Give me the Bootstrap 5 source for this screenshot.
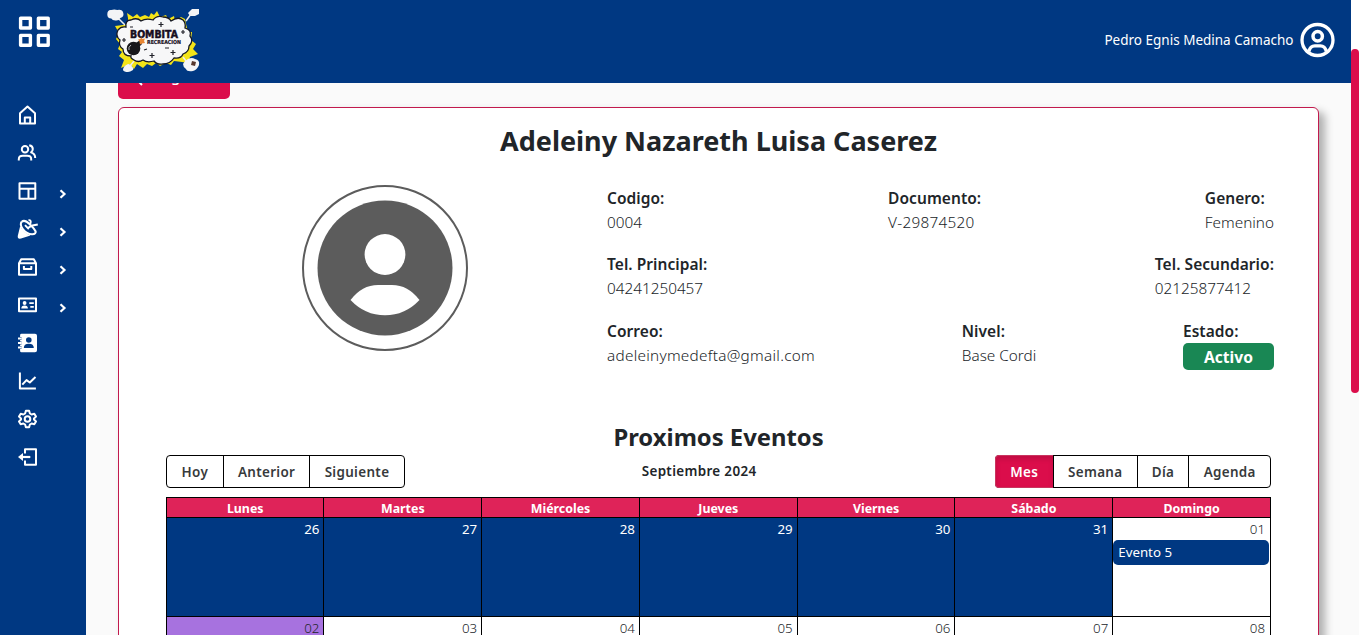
<!DOCTYPE html>
<html lang="es">
<head>
<meta charset="utf-8">
<meta name="viewport" content="width=device-width, initial-scale=1">
<title>Bombita Recreación</title>
<link href="https://cdn.jsdelivr.net/npm/bootstrap@5.3.0/dist/css/bootstrap.min.css" rel="stylesheet">
<style>
:root { --azul: #003882; --rojo: #db0d4b; }
body { font-family: "Noto Sans", "Open Sans", sans-serif; background: #fafafa; color: #212529; line-height: 1.5; }
.azul { background: var(--azul); }
.topbar { height: 83px; padding: 0 16px 0 18px; }
.topbar .menu-ico { margin-top: 14.5px; }
.logo { margin: 6px 0 0 54px; }
.usuario { font-size: 13.5px; height: 80px; gap: 6.5px; }
.sidebar { width: 86px; padding-top: 13px; }
.item { height: 38px; padding-left: 17px; gap: 19px; }
.item svg { display: block; }
.item .chev { margin-top: 5px; }
.ico { fill: none; stroke: #fff; stroke-width: 2; stroke-linejoin: round; stroke-linecap: butt; }
.contenido { padding: 0 32px; }
.regresar { width: 112px; height: 38px; margin-top: -22px; background: var(--rojo); border-radius: 5px; font-size: 15px; line-height: 1; font-weight: 500; gap: 6px; padding-bottom: 7px; }
.ficha { margin-top: 8px; height: 900px; border: 1px solid #c21a4d; border-radius: 6px; box-shadow: 6px 5px 9px rgba(0,0,0,.3); padding: 0 44px 0 47px; }
.titulo { font-size: 27px; font-weight: 700; line-height: 34px; margin: 16px 3px 0 0; }
.datos { height: 256px; padding-top: 27px; }
.avatar { margin-left: 136px; width: 166px; height: 166px; border: 2px solid #5c5c5c; }
.campos { width: 667px; padding-top: .5px; }
.fila + .fila { margin-top: 17.5px; }
.etq { font-size: 15.5px; font-weight: 600; line-height: 24px; letter-spacing: .05px; }
.val { font-size: 15.3px; font-weight: 350; line-height: 25px; }
.correo, .doc { letter-spacing: .28px; }
.activo { width: 91px; height: 27px; font-size: 15.6px; line-height: 28px; margin-top: .5px; background: #198754; border-radius: 5px; }
.subtitulo { font-size: 23.8px; font-weight: 700; line-height: 34px; margin: 6px 3px 0 0; }
.barra { height: 33px; margin: 1px 3px 9px 0; font-size: 13.45px; font-weight: 650; letter-spacing: .33px; }
.grupo { border: 1px solid #000; border-radius: 4px; height: 33px; color: #373a3c; }
.grupo span { padding: 0 14.2px; line-height: 32px; }
.grupo span:first-child { padding: 0 14.6px; }
.grupo span + span { border-left: 1px solid #000; }
.grupo .activa { background: var(--rojo); color: #fff; box-shadow: inset 0 3px 5px rgba(0,0,0,.125); margin: -1px 0 -1px -1px; border-radius: 4px 0 0 4px; border: 1px solid #c9355f; border-right: 0; }
.mes { padding: 6px 1px 0 0; }
.calendario { margin-right: 3px; border: 1px solid #000; height: 700px; }
.dias { height: 20px; background: #df2359; border-bottom: 1px solid #000; color: #fff; font-size: 12.4px; font-weight: 700; line-height: 21px; text-align: center; }
.dias > div, .semana > div { flex: 1 1 0; }
.dias > div:first-child, .semana > div:first-child { flex-grow: .9977; }
.dias > div + div, .semana > div + div { border-left: 1px solid #000; }
.semana { height: 99px; border-bottom: 1px solid #000; font-size: 13.3px; font-weight: 350; }
.num { display: block; text-align: right; padding-right: 4px; line-height: 22px; }
.semana .domingo .num { padding-right: 5px; }
.fuera { background: var(--azul); color: #fff; font-weight: 400; }
.hoy { background: #a772df; }
.evento { background: var(--azul); color: #fff; border-radius: 5px; height: 25px; line-height: 24px; padding-left: 5px; margin-right: 1px; font-weight: 400; font-size: 13.3px; }
.riel { width: 8px; padding-top: 49px; background: linear-gradient(#fff 83px, #fafafa 83px); }
.pulgar { width: 8px; height: 344px; border-radius: 4px; background: var(--rojo); }
</style>
</head>
<body>
<div class="d-flex vh-100 overflow-hidden">
  <div class="d-flex flex-column flex-grow-1 overflow-hidden">
    <header class="topbar azul d-flex align-items-start text-white flex-shrink-0">
      <svg class="menu-ico" width="33" height="34" fill="none" stroke="#fff" stroke-width="3.4" stroke-linejoin="round"><path d="M2.6 3.2h9.8v9.8H2.6zM20.4 3.2h9.8v9.8h-9.8zM2.6 20.4h9.8v9.8H2.6zM20.4 20.4h9.8v9.8h-9.8z"/></svg>
      <svg class="logo" width="96" height="68" viewBox="105 6 96 68">
        <path d="M128 24l0-6-1-5 6 4 4-3 3 3 5-2 4 2 2-4 3 2 3-4 3 6 6-2 2 4 6-3 1 5 6-4 4 2 1 5 2 8 4 0-1 8 5 4-3 5 5 5-8 3-2 6-6-1-8-1-3 4-5-2-6 3-4-3-4 3-5-2-4 4-6-4-3 5-4-5-9 4 3-8-5-4 3-4-4-3 2-5-4-5 3-6-4-7 8-1z" fill="#f3e418"/>
        <path d="M107.300 14.500q0-5 4-4.500 3-1 6 0 5-1 6 3 1 4-3 5-1 3-5 2.500-3 0-4-2-4 0-4-4z" fill="#f3f4f6"/>
        <path d="M192 9h7v5l-4 2h-5l-2-3zM188 59q4-2 7 0 5 1 4 6-2 5-6 6-6 1-7-2-3-2-3-5 2-4 5-5zM123 70q0-4 5-6 4 0 4 3 2 0 1 3-3 2-5 2-4 0-5-2z" fill="#f3f4f6"/>
        <path d="M119 19l6 6M191 14l-5 7M186 61l-3-4M130 66l4-5" stroke="#eee" stroke-width="1.500"/>
        <path d="M126 27Q125 20 131 20Q137 17 141 21Q146 18 153 20Q157 15 163 17Q169 17 171 21Q178 16 183 20Q186 23 185 28Q192 30 190 36Q194 41 189 46Q189 52 183 54Q181 59 174 58Q170 64 163 64Q157 65 154 61Q147 63 143 60Q138 63 134 60Q130 58 131 56Q123 56 123 49Q118 46 120 40Q115 36 118 30Q121 26 126 27z" fill="#f7f7f8" stroke="#151824" stroke-width="1.300"/>
        <text x="130" y="37.500" font-family="DejaVu Sans" font-weight="700" font-size="10" textLength="48" lengthAdjust="spacingAndGlyphs" fill="#160d20" stroke="#160d20" stroke-width=".5">BOMBITA</text>
        <text x="147" y="44" font-family="DejaVu Sans" font-weight="700" font-size="5.500" textLength="34" lengthAdjust="spacingAndGlyphs" fill="#160d20" stroke="#160d20" stroke-width=".2">RECREACION</text>
        <circle cx="133.500" cy="48.500" r="6.800" fill="#17171b"/><path d="M136 43l4-3 2 4-3 3z" fill="#17171b"/>
        <path d="M131 45q-3 2-2 5" stroke="#b8b8bd" fill="none"/>
        <path d="M141 37l1.500 2 2.500-.5-1 2.500 1 2-3 .5-2 1-.5-3-1.500-2 2.500-.500z" fill="#e98632"/>
        <path d="M161 22v5M158.500 24.500h5M124 38v4M122 40h4M152 53v5M149.500 55.500h5M173 50v5M170.500 52.500h5M183 30v4M181 32h4M130 27h3M165 48h4M144 50l3-1" stroke="#22222a" stroke-width="1.200"/>
        <path d="M192 61l4 1-1 4-4-1z" fill="#57372d"/>
      </svg>
      <div class="usuario d-flex align-items-center ms-auto">
        <span>Pedro Egnis Medina Camacho</span>
        <svg width="35" height="36" viewBox="0 0 35 36" fill="none" stroke="#fff" stroke-width="3.300"><circle cx="17.500" cy="18" r="15.500"/><circle cx="17.700" cy="14.300" r="4.700" stroke-width="3.500"/><path d="M8.800 29.500q1.400-5.700 6-5.700h5.600q4.600 0 6 5.700"/></svg>
      </div>
    </header>
    <div class="d-flex flex-grow-1 overflow-hidden">
      <nav class="sidebar azul flex-shrink-0">
        <div class="item d-flex align-items-center"><svg class="ico" width="21" height="22"><path d="M3 19.500V9.200L10.500 2.500 18 9.200v10.300zM7.800 19.500v-6h5.400v6"/></svg></div>
        <div class="item d-flex align-items-center"><svg class="ico" width="21" height="22"><circle cx="8" cy="7.300" r="3.200"/><path d="M1.800 18.500v-1.300q0-3.400 4-3.400h4.400q4 0 4 3.400v1.300M12.200 3.300q3.600.7 3.600 3.800 0 2-1.700 3.300 4.100 1.200 4.100 5.600"/></svg></div>
        <div class="item d-flex align-items-center"><svg class="ico" width="21" height="22"><path d="M2.500 3.200h15.800v15.600H2.500zM2.500 8.700h15.800M11.500 8.700v10.100"/></svg><svg class="chev" width="12" height="12"><path d="M3.500 2.200L7.500 6 3.500 9.800" fill="none" stroke="#fff" stroke-width="2.200"/></svg></div>
        <div class="item d-flex align-items-center"><svg width="21" height="22" viewBox="0 0 21 22"><path d="M4.800 3.500C1.500 7.500 8 16 15 16.200c3 .1 4.300-1.500 3.500-3.200" fill="none" stroke="#fff" stroke-width="2"/><path d="M3.200 8Q6.500 14.800 13.500 17.500L4 20.600Q.2 21.400.8 17.800z" fill="#fff"/><path d="M4.800 3.800Q7.500 1.200 12.500 6T18.500 13.500" fill="none" stroke="#fff" stroke-width="2"/><path d="M8 7.200l3.800 4M11 9.800l4.500-2.300L20.800 6.500M11.500 2.200q3-.5 2 3l-.8 2" fill="none" stroke="#fff" stroke-width="1.900"/></svg><svg class="chev" width="12" height="12"><path d="M3.500 2.200L7.500 6 3.500 9.800" fill="none" stroke="#fff" stroke-width="2.200"/></svg></div>
        <div class="item d-flex align-items-center"><svg class="ico" width="21" height="22"><path d="M2 7.200L4.200 3.200h12.600L19 7.200v11.600H2zM2 7.200h17M6.900 10v3h7.400v-3"/></svg><svg class="chev" width="12" height="12"><path d="M3.500 2.200L7.500 6 3.500 9.800" fill="none" stroke="#fff" stroke-width="2.200"/></svg></div>
        <div class="item d-flex align-items-center"><svg class="ico" width="21" height="22"><path d="M2 4.500h17v12.800H2z"/><circle cx="7.600" cy="9" r="1.900" fill="#fff" stroke="none"/><path d="M4.300 14.500q0-3 3.300-3t3.300 3z" fill="#fff" stroke="none"/><path d="M12.300 9.200h4.500M13.300 12.800h3.500" stroke-width="1.800"/></svg><svg class="chev" width="12" height="12"><path d="M3.500 2.200L7.500 6 3.500 9.800" fill="none" stroke="#fff" stroke-width="2.200"/></svg></div>
        <div class="item d-flex align-items-center"><svg width="21" height="22"><path d="M4.500 1.800H18q2 0 2 2v14.500q0 2-2 2H4.500q-1.400 0-1.400-1.400V3.200q0-1.400 1.400-1.400z" fill="#fff"/><path d="M1 6.500h3.500M1 11h3.500M1 15.500h3.500" stroke="#003882" stroke-width="3.200"/><path d="M1 6.500h3.700M1 11h3.700M1 15.500h3.700" stroke="#fff" stroke-width="1.900"/><circle cx="11.800" cy="8" r="2.800" fill="#003882"/><path d="M6.800 16q0-4.300 5-4.300t5 4.300z" fill="#003882"/></svg></div>
        <div class="item d-flex align-items-center"><svg class="ico" width="21" height="22"><path d="M2.900 2.500v16h16M5.300 14.700l4.200-4.600 3.300 2.400 5.700-5.400"/></svg></div>
        <div class="item d-flex align-items-center"><svg class="ico" width="21" height="22" viewBox="0 0 21 22"><circle cx="10.500" cy="11" r="2.800"/><path d="M8.900 2.800h3.200l.8 2.700 1.700 1 2.700-.7 1.700 2.800-2 1.900v1l2 1.900-1.700 2.800-2.700-.7-1.700 1-.8 2.700H8.900l-.8-2.700-1.700-1-2.700.7L2 13.400l2-1.900v-1L2 8.600l1.700-2.800 2.700.7 1.700-1z"/></svg></div>
        <div class="item d-flex align-items-center"><svg class="ico" width="21" height="22"><path d="M8 7.500V3.200h11v15.600H8v-4.300"/><path d="M4 11h9.300" stroke-width="2.200"/><path d="M1 11l5-4v8z" fill="#fff" stroke="none"/></svg></div>
      </nav>
      <main class="contenido flex-grow-1 overflow-hidden">
        <div class="regresar d-flex align-items-center justify-content-center text-white"><svg width="16" height="19" fill="none" stroke="#fff" stroke-width="2"><path d="M9 6L3 12l6 6M3 12h12" transform="translate(2 0)"/></svg>Regresar</div>
        <section class="ficha bg-white">
          <h1 class="titulo text-center">Adeleiny Nazareth Luisa Caserez</h1>
          <div class="datos d-flex justify-content-between align-items-start">
            <div class="avatar rounded-circle d-flex align-items-center justify-content-center">
              <svg width="136" height="136" viewBox="0 0 136 136"><circle cx="68" cy="68" r="67.500" fill="#5c5c5c"/><circle cx="68" cy="54.500" r="20.400" fill="#fff"/><path d="M33.500 100Q45 85 61 85h14q16 0 27.500 15Q88 115.300 68 115.300T33.500 100z" fill="#fff"/></svg>
            </div>
            <div class="campos">
              <div class="fila d-flex justify-content-between">
                <div><div class="etq">Codigo:</div><div class="val">0004</div></div>
                <div><div class="etq">Documento:</div><div class="val doc">V-29874520</div></div>
                <div><div class="etq">Genero:</div><div class="val">Femenino</div></div>
              </div>
              <div class="fila d-flex justify-content-between">
                <div><div class="etq">Tel. Principal:</div><div class="val">04241250457</div></div>
                <div><div class="etq">Tel. Secundario:</div><div class="val">02125877412</div></div>
              </div>
              <div class="fila d-flex justify-content-between">
                <div><div class="etq">Correo:</div><div class="val correo">adeleinymedefta@gmail.com</div></div>
                <div><div class="etq">Nivel:</div><div class="val">Base Cordi</div></div>
                <div><div class="etq">Estado:</div><div class="activo text-white fw-bold text-center">Activo</div></div>
              </div>
            </div>
          </div>
          <h2 class="subtitulo text-center">Proximos Eventos</h2>
          <div class="barra d-flex justify-content-between">
            <div class="grupo d-flex"><span>Hoy</span><span>Anterior</span><span>Siguiente</span></div>
            <div class="mes">Septiembre 2024</div>
            <div class="grupo d-flex"><span class="activa">Mes</span><span>Semana</span><span>Día</span><span>Agenda</span></div>
          </div>
          <div class="calendario">
            <div class="dias d-flex"><div>Lunes</div><div>Martes</div><div>Miércoles</div><div>Jueves</div><div>Viernes</div><div>Sábado</div><div>Domingo</div></div>
            <div class="semana d-flex">
              <div class="fuera"><span class="num">26</span></div><div class="fuera"><span class="num">27</span></div><div class="fuera"><span class="num">28</span></div><div class="fuera"><span class="num">29</span></div><div class="fuera"><span class="num">30</span></div><div class="fuera"><span class="num">31</span></div>
              <div class="domingo"><span class="num">01</span><div class="evento">Evento 5</div></div>
            </div>
            <div class="semana d-flex">
              <div class="hoy"><span class="num">02</span></div><div><span class="num">03</span></div><div><span class="num">04</span></div><div><span class="num">05</span></div><div><span class="num">06</span></div><div><span class="num">07</span></div><div class="domingo"><span class="num">08</span></div>
            </div>
          </div>
        </section>
      </main>
    </div>
  </div>
  <div class="riel flex-shrink-0"><div class="pulgar"></div></div>
</div>
<script src="https://cdn.jsdelivr.net/npm/bootstrap@5.3.0/dist/js/bootstrap.bundle.min.js"></script>
</body>
</html>
